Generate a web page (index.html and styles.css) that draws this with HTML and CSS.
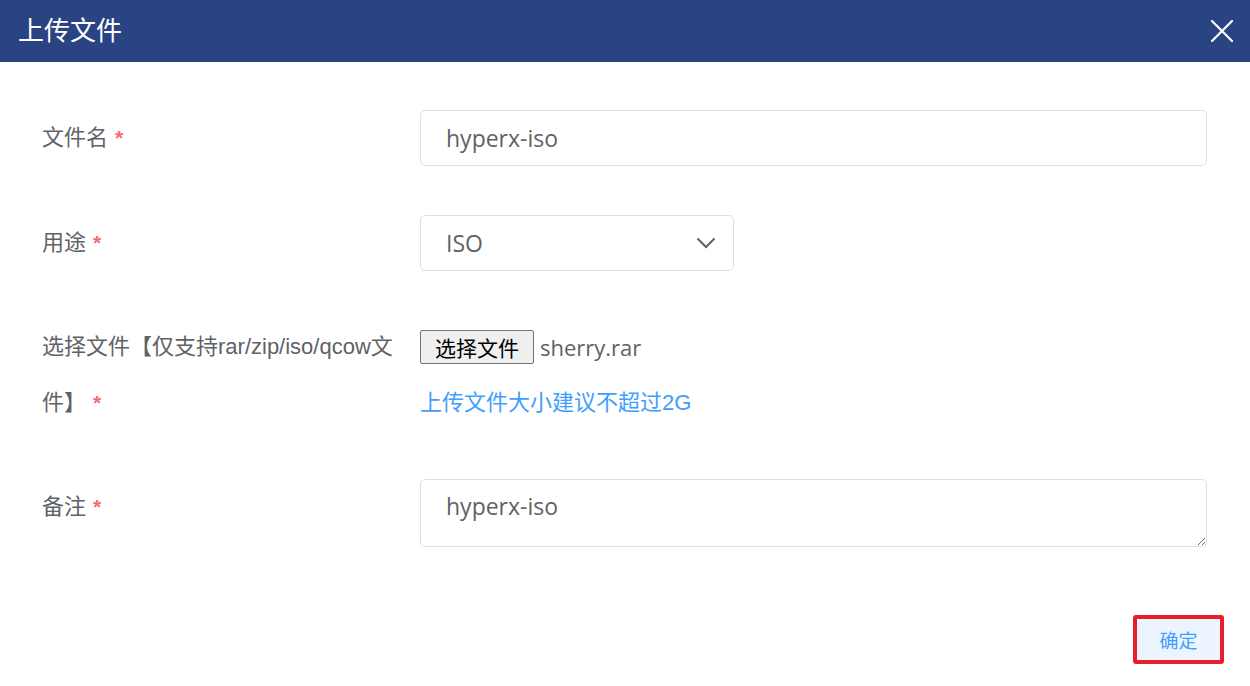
FILE: index.html
```html
<!DOCTYPE html>
<html lang="zh">
<head>
<meta charset="utf-8">
<title>上传文件</title>
<link rel="stylesheet" href="styles.css">
</head>
<body>
<div class="dialog">
  <header class="dialog-header">
    <span class="dialog-title">上传文件</span>
    <span class="close-btn" aria-label="关闭">
      <svg width="22" height="22" viewBox="0 0 22 22"><path d="M1 1 L21 21 M21 1 L1 21" stroke="#fff" stroke-width="2.2" stroke-linecap="square" fill="none"/></svg>
    </span>
  </header>
  <div class="form">
    <div class="row row-1">
      <div class="label">文件名<span class="req">*</span></div>
      <div class="field">
        <input class="input" type="text" value="hyperx-iso">
      </div>
    </div>
    <div class="row row-2">
      <div class="label">用途<span class="req">*</span></div>
      <div class="field">
        <div class="select">
          <span>ISO</span>
          <svg class="chev" width="20" height="12" viewBox="0 0 20 12"><path d="M1.5 1.5 L10 10 L18.5 1.5" stroke="#606266" stroke-width="2" fill="none"/></svg>
        </div>
      </div>
    </div>
    <div class="row row-3">
      <div class="label">选择文件【仅支持rar/zip/iso/qcow文件】<span class="req">*</span></div>
      <div class="field">
        <div class="file-line">
          <button class="file-btn" type="button">选择文件</button>
          <span class="file-name">sherry.rar</span>
        </div>
        <div class="hint">上传文件大小建议不超过2G</div>
      </div>
    </div>
    <div class="row row-4">
      <div class="label">备注<span class="req">*</span></div>
      <div class="field">
        <textarea class="textarea">hyperx-iso</textarea>
      </div>
    </div>
  </div>
  <footer class="dialog-footer">
    <div class="ok-frame"><button class="ok-btn" type="button">确定</button></div>
  </footer>
</div>
</body>
</html>
```

FILE: styles.css
```css
html, body {
  margin: 0;
  padding: 0;
  background: #fff;
}
body {
  font-family: "Noto Sans CJK SC", "Liberation Sans", sans-serif;
  color: #606266;
}
.dialog {
  width: 1250px;
  height: 686px;
  background: #fff;
  overflow: hidden;
}
.dialog-header {
  height: 62px;
  background: #2a4383;
  display: flex;
  align-items: center;
  justify-content: space-between;
  padding: 0 17px 0 18px;
  box-sizing: border-box;
}
.dialog-title {
  color: #fff;
  font-size: 26px;
  line-height: 1;
  margin-top: -5px;
}
.close-btn {
  display: flex;
  width: 22px;
  height: 22px;
}
.form {
  padding: 48px 43px 0 42px;
}
.row {
  display: flex;
}
.row-1 { margin-bottom: 49px; }
.row-2 { margin-bottom: 48px; }
.row-3 { margin-bottom: 48px; }
.label {
  width: 378px;
  flex: none;
  box-sizing: border-box;
  padding-right: 20px;
  font-family: "Liberation Sans", "Noto Sans CJK SC", sans-serif;
  font-size: 22px;
  line-height: 56px;
  color: #606266;
}
.req {
  color: #f56c6c;
  font-size: 21px;
  font-weight: bold;
  margin-left: 7px;
}
.field {
  flex: 1;
  min-width: 0;
}
.input {
  display: block;
  width: 100%;
  height: 56px;
  box-sizing: border-box;
  border: 1px solid #dcdfe6;
  border-radius: 5px;
  padding: 0 25px;
  font-family: "Open Sans", "Noto Sans CJK SC", sans-serif;
  font-size: 23px;
  color: #606266;
  outline: none;
  background: #fff;
}
.select {
  width: 314px;
  height: 56px;
  box-sizing: border-box;
  border: 1px solid #dcdfe6;
  border-radius: 5px;
  padding: 0 17px 0 25px;
  display: flex;
  align-items: center;
  justify-content: space-between;
  font-family: "Open Sans", sans-serif;
  font-size: 23px;
  color: #606266;
}
.chev {
  display: block;
}
.file-line {
  height: 56px;
  display: flex;
  align-items: center;
}
.file-btn {
  height: 34px;
  width: 114px;
  box-sizing: border-box;
  border: 1px solid #767676;
  border-radius: 2px;
  background: #efefef;
  color: #000;
  font-family: "Noto Sans CJK SC", sans-serif;
  font-size: 21px;
  line-height: 1;
  padding: 0;
  margin-right: 6px;
}
.file-name {
  font-family: "Open Sans", sans-serif;
  font-size: 22px;
  color: #606266;
}
.hint {
  height: 56px;
  line-height: 56px;
  font-family: "Liberation Sans", "Noto Sans CJK SC", sans-serif;
  font-size: 22px;
  color: #409eff;
}
.textarea {
  display: block;
  width: 100%;
  height: 68px;
  box-sizing: border-box;
  border: 1px solid #dcdfe6;
  border-radius: 5px;
  padding: 10px 25px;
  font-family: "Open Sans", sans-serif;
  font-size: 23px;
  line-height: 32px;
  color: #606266;
  resize: vertical;
  outline: none;
}
.dialog-footer {
  display: flex;
  justify-content: flex-end;
  padding: 68px 26px 0 0;
}
.ok-frame {
  border: 4px solid #e81e2a;
  border-radius: 3px;
  display: flex;
}
.ok-btn {
  width: 83px;
  height: 41px;
  border: none;
  background: #ecf5ff;
  color: #409eff;
  font-family: "Noto Sans CJK SC", sans-serif;
  font-size: 19px;
  padding: 0;
}
```
